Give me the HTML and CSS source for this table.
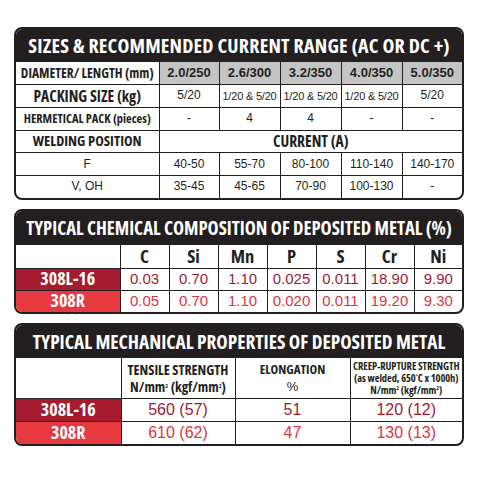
FILE: index.html
```html
<!DOCTYPE html>
<html lang="en">
<head>
    <meta charset="UTF-8">
    <title>Electrode Data Sheet</title>
    <link rel="stylesheet" href="styles.css">
</head>
<body>
    <div class="sheet">
        <div class="card">
            <div class="card-title title-1">SIZES &amp; RECOMMENDED CURRENT RANGE (AC OR DC +)</div>
            <table class="sizes">
                <colgroup>
                    <col style="width:143px"><col style="width:60px"><col style="width:61px"><col style="width:61px"><col style="width:61px"><col>
                </colgroup>
                <tr class="row-head">
                    <th class="label">DIAMETER/ LENGTH (mm)</th>
                    <th class="gray">2.0/250</th>
                    <th class="gray">2.6/300</th>
                    <th class="gray">3.2/350</th>
                    <th class="gray">4.0/350</th>
                    <th class="gray">5.0/350</th>
                </tr>
                <tr>
                    <th class="label big">PACKING SIZE (kg)</th>
                    <td>5/20</td>
                    <td class="tight">1/20 &amp; 5/20</td>
                    <td class="tight">1/20 &amp; 5/20</td>
                    <td class="tight">1/20 &amp; 5/20</td>
                    <td>5/20</td>
                </tr>
                <tr>
                    <th class="label small">HERMETICAL PACK (pieces)</th>
                    <td>-</td>
                    <td>4</td>
                    <td>4</td>
                    <td>-</td>
                    <td>-</td>
                </tr>
                <tr>
                    <th class="label mid">WELDING POSITION</th>
                    <th colspan="5" class="label big">CURRENT (A)</th>
                </tr>
                <tr>
                    <td>F</td>
                    <td>40-50</td>
                    <td>55-70</td>
                    <td>80-100</td>
                    <td>110-140</td>
                    <td>140-170</td>
                </tr>
                <tr>
                    <td>V, OH</td>
                    <td>35-45</td>
                    <td>45-65</td>
                    <td>70-90</td>
                    <td>100-130</td>
                    <td>-</td>
                </tr>
            </table>
        </div>

        <div class="card">
            <div class="card-title title-2">TYPICAL CHEMICAL COMPOSITION OF DEPOSITED METAL (%)</div>
            <table class="chem">
                <colgroup>
                    <col style="width:104px"><col style="width:49px"><col style="width:49px"><col style="width:49px"><col style="width:49px"><col style="width:49px"><col style="width:49px"><col>
                </colgroup>
                <tr class="row-head">
                    <th></th>
                    <th>C</th><th>Si</th><th>Mn</th><th>P</th><th>S</th><th>Cr</th><th>Ni</th>
                </tr>
                <tr class="dark">
                    <th class="grade">308L-16</th>
                    <td>0.03</td><td>0.70</td><td>1.10</td><td>0.025</td><td>0.011</td><td>18.90</td><td>9.90</td>
                </tr>
                <tr class="bright">
                    <th class="grade">308R</th>
                    <td>0.05</td><td>0.70</td><td>1.10</td><td>0.020</td><td>0.011</td><td>19.20</td><td>9.30</td>
                </tr>
            </table>
        </div>

        <div class="card">
            <div class="card-title title-3">TYPICAL MECHANICAL PROPERTIES OF DEPOSITED METAL</div>
            <table class="mech">
                <colgroup>
                    <col style="width:105px"><col style="width:114px"><col style="width:115px"><col>
                </colgroup>
                <tr class="row-head">
                    <th></th>
                    <th class="tensile">TENSILE STRENGTH<br>N/mm<sup>2</sup> (kgf/mm<sup>2</sup>)</th>
                    <th>ELONGATION<br><span class="pct">%</span></th>
                    <th class="creep">CREEP-RUPTURE STRENGTH<br>(as welded, 650<sup>°</sup>C x 1000h)<br>N/mm<sup>2</sup> (kgf/mm<sup>2</sup>)</th>
                </tr>
                <tr class="dark">
                    <th class="grade">308L-16</th>
                    <td>560 (57)</td><td>51</td><td>120 (12)</td>
                </tr>
                <tr class="bright">
                    <th class="grade">308R</th>
                    <td>610 (62)</td><td>47</td><td>130 (13)</td>
                </tr>
            </table>
        </div>
    </div>
</body>
</html>
```

FILE: styles.css
```css
body {
    margin: 0;
    padding: 0;
    background-color: #fff;
    font-family: "Liberation Sans", Arial, sans-serif;
    color: #231f20;
}

.sheet {
    display: flex;
    flex-direction: column;
    gap: 9px;
    width: 450px;
    padding: 27px 0 0 14px;
}

.card {
    border: 2px solid #231f20;
    border-radius: 8px;
    overflow: hidden;
    background-color: #fff;
}

.card-title {
    background-color: #231f20;
    color: #fff;
    height: 33px;
    line-height: 33px;
    text-align: center;
    font-family: "Open Sans", sans-serif;
    font-stretch: 75%;
    font-weight: bold;
    white-space: nowrap;
}

.title-1 {
    font-size: 20px;
    letter-spacing: 0.2px;
}

.title-2 {
    height: 34px;
    line-height: 34px;
    font-size: 18.7px;
}

.title-3 {
    font-size: 19.3px;
}

table {
    width: 100%;
    border-collapse: collapse;
    table-layout: fixed;
}

th, td {
    border: 1.5px solid #231f20;
    padding: 0;
    line-height: 1.1;
    text-align: center;
    white-space: nowrap;
}

tr:first-child th, tr:first-child td {
    border-top: none;
}

th:first-child, td:first-child {
    border-left: none;
}

th:last-child, td:last-child {
    border-right: none;
}

tr:last-child th, tr:last-child td {
    border-bottom: none;
}

/* sizes table */
.sizes tr {
    height: 22.7px;
}

.sizes th, .sizes td {
    font-size: 12px;
}

.sizes th {
    font-family: "Open Sans", sans-serif;
    font-stretch: 75%;
    font-size: 13.5px;
}

.sizes .label.big {
    font-size: 15.5px;
}

.sizes .label.mid {
    font-size: 14.5px;
}

.sizes .label.small {
    font-size: 12.4px;
}

.sizes .gray {
    background-color: #c4c4c4;
    font-family: "Liberation Sans", Arial, sans-serif;
    font-stretch: normal;
    font-size: 13px;
}

.sizes td.tight {
    font-size: 11px;
    letter-spacing: -0.2px;
}

/* chemistry + mechanical */
.chem th, .mech th {
    font-family: "Open Sans", sans-serif;
    font-stretch: 75%;
    font-size: 18.5px;
}

.chem tr, .mech tr {
    height: 22px;
}

.chem .row-head {
    height: 23px;
}

.chem td, .mech td {
    font-size: 15px;
}

.grade {
    color: #fff;
}

.chem th.grade, .mech th.grade {
    font-size: 18px;
}

.dark .grade {
    background-color: #a41c2e;
}

.dark td {
    color: #9c1b31;
}

.bright .grade {
    background-color: #e63a40;
}

.bright td {
    color: #e2333b;
}

.mech .row-head {
    height: 40px;
}

.mech tr.dark, .mech tr.bright {
    height: 23px;
}

.mech .row-head th {
    font-size: 13px;
    line-height: 17px;
}

.mech .row-head th.tensile {
    font-size: 14px;
}

.mech td {
    font-size: 16px;
}

.mech .row-head th.creep {
    font-size: 10.5px;
    line-height: 12px;
    letter-spacing: -0.1px;
}

.mech sup {
    font-size: 6px;
    vertical-align: 4px;
    line-height: 0;
}

.pct {
    font-family: "Liberation Sans", Arial, sans-serif;
    font-weight: normal;
}
```
